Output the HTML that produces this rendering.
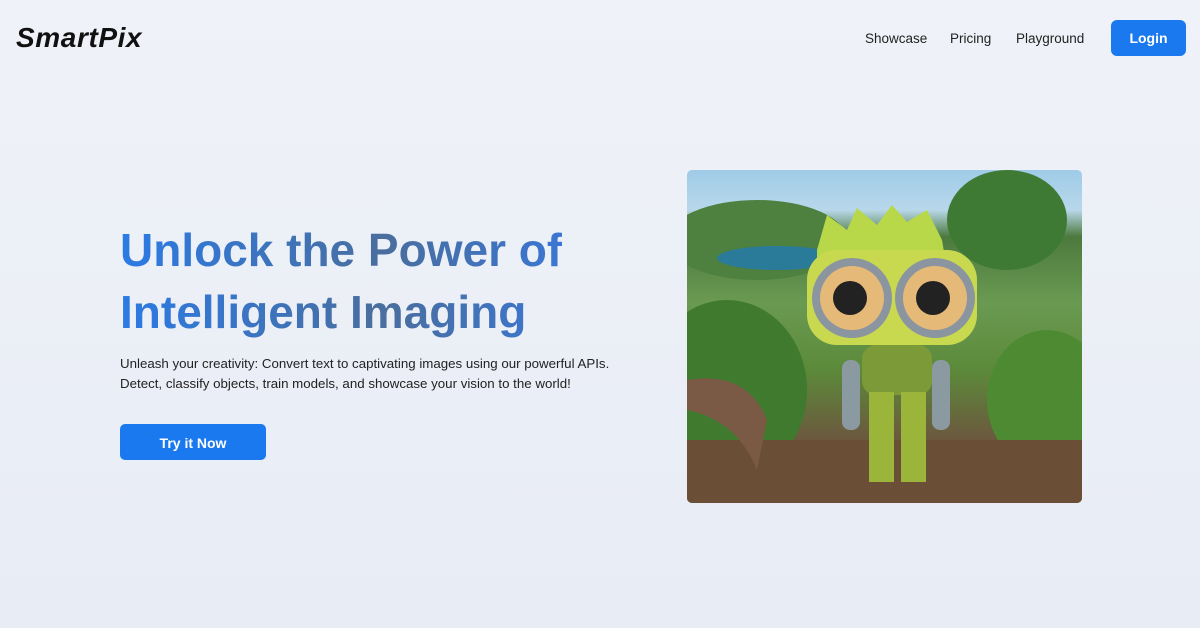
<!DOCTYPE html>
<html><head><meta charset="utf-8"><style>
*{margin:0;padding:0;box-sizing:border-box}
body{width:1200px;height:628px;overflow:hidden;background:linear-gradient(#eff2f8,#e8ecf5);font-family:"Liberation Sans",sans-serif;position:relative}
.logo{position:absolute;left:16px;top:22px;font-size:28px;font-weight:bold;font-style:italic;color:#111;letter-spacing:0.6px}
.nav{position:absolute;top:31px;font-size:13.5px;color:#222}
.login{position:absolute;left:1111px;top:20px;width:75px;height:36px;background:#1a79ee;border-radius:6px;color:#fff;font-weight:bold;font-size:14px;text-align:center;line-height:37px}
h1{position:absolute;left:120px;top:219px;font-size:46px;line-height:62px;font-weight:bold;background:linear-gradient(90deg,#2b7ae4,#4a6e9e 60%,#3a76d2);-webkit-background-clip:text;color:transparent}
p{position:absolute;left:120px;top:354px;font-size:13.3px;line-height:20px;color:#222}
.btn{position:absolute;left:120px;top:424px;width:146px;height:36px;background:#1a79ee;border-radius:5px;color:#fff;font-weight:bold;font-size:14px;text-align:center;line-height:38px}
.img{position:absolute;left:687px;top:170px;width:395px;height:333px;border-radius:5px;overflow:hidden;background:linear-gradient(#9fcbe8 0,#b8d8ea 12%,#4c7a3e 20%,#6a9a52 40%,#5c8a3a 60%,#6b5a3e 80%,#5a4430 100%)}
</style></head><body>
<div class="logo">SmartPix</div>
<div class="nav" style="left:865px">Showcase</div>
<div class="nav" style="left:950px">Pricing</div>
<div class="nav" style="left:1016px">Playground</div>
<div class="login">Login</div>
<h1>Unlock the Power of<br>Intelligent Imaging</h1>
<p>Unleash your creativity: Convert text to captivating images using our powerful APIs.<br>Detect, classify objects, train models, and showcase your vision to the world!</p>
<div class="btn">Try it Now</div>
<div class="img"><svg width="395" height="333">
<ellipse cx="70" cy="70" rx="90" ry="40" fill="#4e8040"/>
<ellipse cx="320" cy="50" rx="60" ry="50" fill="#3f7a35"/>
<ellipse cx="90" cy="88" rx="60" ry="12" fill="#2a7a9a"/>
<ellipse cx="40" cy="220" rx="80" ry="90" fill="#3f7a2e"/>
<ellipse cx="360" cy="230" rx="60" ry="70" fill="#4d8a32"/>
<rect x="0" y="270" width="395" height="63" fill="#6a4e36"/>
<path d="M0 210 Q60 200 80 250 L70 300 Q50 250 0 240Z" fill="#7a5a44"/>
<path d="M130 80 L140 45 L160 60 L170 38 L190 55 L205 35 L220 52 L240 40 L255 70 L260 100 L130 100Z" fill="#b8d84a"/>
<rect x="120" y="80" width="170" height="95" rx="30" fill="#c9d94f"/>
<circle cx="165" cy="128" r="40" fill="#8a95a0"/><circle cx="165" cy="128" r="32" fill="#e5b978"/><circle cx="163" cy="128" r="17" fill="#222"/>
<circle cx="248" cy="128" r="40" fill="#8a95a0"/><circle cx="248" cy="128" r="32" fill="#e5b978"/><circle cx="246" cy="128" r="17" fill="#222"/>
<rect x="175" y="175" width="70" height="50" rx="14" fill="#7d9a38"/>
<rect x="182" y="222" width="25" height="90" fill="#9ab53a"/><rect x="214" y="222" width="25" height="90" fill="#9ab53a"/>
<rect x="155" y="190" width="18" height="70" rx="8" fill="#8a9aa0"/><rect x="245" y="190" width="18" height="70" rx="8" fill="#8a9aa0"/>
</svg></div>
</body></html>
